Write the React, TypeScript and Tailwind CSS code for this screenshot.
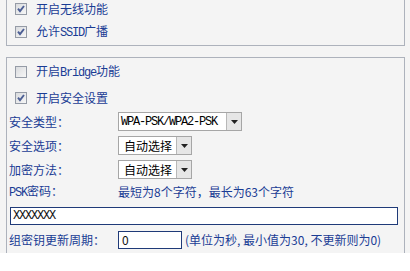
import React from "react";

const cjk = "font-['Noto_Sans_CJK_SC','Noto_Sans',sans-serif]";
const mono = "font-['Liberation_Mono','Noto_Sans_CJK_SC',monospace]";
const blue = "text-[#1a3c94]";
const lat = `text-[12px] tracking-[-1.2px] ${mono}`;

function Check({ checked }: { checked: boolean }) {
  return (
    <svg width="12" height="12" viewBox="0 0 12 12" className="shrink-0">
      <defs>
        <linearGradient id="cbg" x1="0" y1="0" x2="1" y2="1">
          <stop offset="0" stopColor="#d8dadd" />
          <stop offset="1" stopColor="#f8f8f8" />
        </linearGradient>
      </defs>
      <rect x="0.5" y="0.5" width="11" height="11" fill="url(#cbg)" stroke="#959ba6" />
      {checked && (
        <path d="M3 5.6 L5 8.2 L9 3" stroke="#4d5f95" strokeWidth="1.9" fill="none" />
      )}
    </svg>
  );
}

function CheckRow({ checked, children }: { checked: boolean; children: React.ReactNode }) {
  return (
    <div className="flex h-[18px] items-center pl-[8px]">
      <Check checked={checked} />
      <span className={`ml-[9px] text-[12px] leading-none ${blue} ${cjk}`}>{children}</span>
    </div>
  );
}

function Arrow() {
  return (
    <div className="flex h-full w-[15px] items-center justify-center border-l border-[#b8b8b8] bg-[#e6e6e6]">
      <svg width="7" height="4" viewBox="0 0 7 4">
        <path d="M0 0 L7 0 L3.5 4 Z" fill="#222" />
      </svg>
    </div>
  );
}

function Select({ w, children, latin }: { w: string; children: React.ReactNode; latin?: boolean }) {
  return (
    <div className={`flex h-[19px] items-stretch border border-[#a6a6a6] bg-white ${w}`}>
      <div
        className={`flex flex-1 items-center text-black ${
          latin ? `pl-[2px] ${lat}` : `pl-[5px] text-[12px] ${cjk}`
        }`}
      >
        {children}
      </div>
      <Arrow />
    </div>
  );
}

function Label({ children }: { children: React.ReactNode }) {
  return (
    <div className={`w-[111px] shrink-0 pl-[2px] text-[12px] leading-none ${blue} ${cjk}`}>{children}</div>
  );
}

export default function App() {
  return (
    <div className="w-[410px] bg-white">
      <div className="h-[253px] bg-[#f4f4f4]">
        {/* top panel */}
        <div className="ml-[6px] flex h-[46px] w-[399px] flex-col gap-[5px] border-x border-b border-[#adb2bc]">
          <CheckRow checked>开启无线功能</CheckRow>
          <CheckRow checked>
            允许<span className={lat}>SSID</span>广播
          </CheckRow>
        </div>
        {/* second panel */}
        <div className="ml-[6px] mt-[11px] flex h-[196px] w-[399px] flex-col border-x border-t border-[#adb2bc]">
          <div className="mt-[5px]">
            <CheckRow checked={false}>
              开启<span className={lat}>Bridge</span>功能
            </CheckRow>
          </div>
          <div className="mt-[8px]">
            <CheckRow checked>开启安全设置</CheckRow>
          </div>
          <div className="mt-[5px] flex h-[19px] items-center">
            <Label>安全类型：</Label>
            <Select w="w-[124px]" latin>
              WPA-PSK/WPA2-PSK
            </Select>
          </div>
          <div className="mt-[5px] flex h-[19px] items-center">
            <Label>安全选项：</Label>
            <Select w="w-[74px]">自动选择</Select>
          </div>
          <div className="mt-[5px] flex h-[19px] items-center">
            <Label>加密方法：</Label>
            <Select w="w-[74px]">自动选择</Select>
          </div>
          <div className="mt-[4px] flex h-[17px] items-center">
            <Label>
              <span className={lat}>PSK</span>密码：
            </Label>
            <span className={`text-[12px] leading-none ${blue} ${cjk}`}>最短为8个字符，最长为63个字符</span>
          </div>
          <div className="mt-[7px] pl-[3px]">
            <div
              className={`flex h-[18px] w-[388px] items-center border border-[#1f3a78] bg-white pl-[2px] text-[#111] ${lat}`}
            >
              XXXXXXX
            </div>
          </div>
          <div className="mt-[6px] flex h-[18px] items-center">
            <Label>组密钥更新周期：</Label>
            <div
              className={`flex h-[18px] w-[64px] items-center border border-[#1f3a78] bg-white pl-[3px] text-[12px] text-[#111] ${cjk}`}
            >
              0
            </div>
            <span className={`ml-[3px] text-[12px] leading-none ${blue} ${cjk}`}>
              (单位为秒, 最小值为30, 不更新则为0)
            </span>
          </div>
        </div>
      </div>
    </div>
  );
}
